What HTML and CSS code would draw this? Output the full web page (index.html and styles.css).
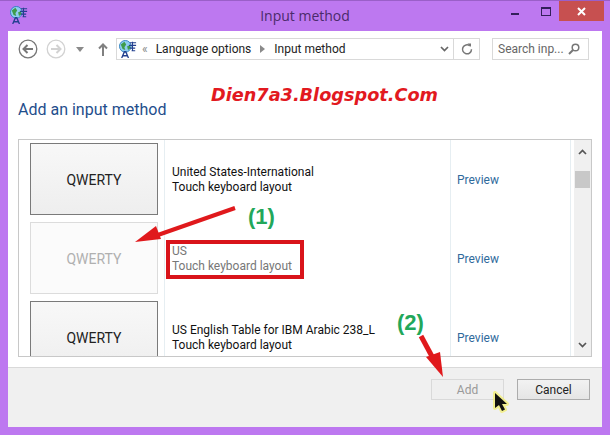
FILE: index.html
```html
<!DOCTYPE html>
<html>
    <head>
        <link rel="stylesheet" href="styles.css">
    </head>
    <body>
        <div id="window">
            <div class="titleBar">
                <svg class="titleIcon" width="18" height="18" viewBox="0 0 20 20">
                    <circle cx="7" cy="7" r="6.500" fill="#8fcdf0" stroke="#2d7fc0" stroke-width="1"/>
                    <path d="M2 5l4-3 2 3-2 3 1 3-3-1zM9 7l3-1 1 3-3 2z" fill="#3f9c4a"/>
                    <path d="M12 3h7M11 6h8M12 9h6M14 12h4M15 2v10" stroke="#23408f" stroke-width="1.200" fill="none"/>
                    <path d="M3 20l3-7h1.500l3 7M4.500 17.500h4.500" stroke="#23408f" stroke-width="1.500" fill="none"/>
                </svg>
                <div class="titleText">Input method</div>
                <div class="winControls">
                    <span class="minBtn"></span>
                    <span class="maxBtn"></span>
                    <span class="closeBtn">
                        <svg width="9" height="9" viewBox="0 0 9 9"><path d="M1 1l7 7M8 1l-7 7" stroke="#fff" stroke-width="2"/></svg>
                    </span>
                </div>
            </div>
            <div id="content">
                <div class="navRow">
                    <svg class="backIcon" width="20" height="20" viewBox="0 0 20 20">
                        <circle cx="10" cy="10" r="8.800" fill="#fff" stroke="#777" stroke-width="1.300"/>
                        <path d="M15 10H6M9.500 6L5.500 10l4 4" fill="none" stroke="#777" stroke-width="2"/>
                    </svg>
                    <svg class="forwardIcon" width="20" height="20" viewBox="0 0 20 20">
                        <circle cx="10" cy="10" r="8.800" fill="#fff" stroke="#d2d2d2" stroke-width="1.300"/>
                        <path d="M5 10h9M10.500 6l4 4-4 4" fill="none" stroke="#d2d2d2" stroke-width="2"/>
                    </svg>
                    <svg class="caretIcon" width="8" height="5" viewBox="0 0 8 5"><path d="M0 0h8L4 5z" fill="#8a8a8a"/></svg>
                    <svg class="upIcon" width="10" height="13" viewBox="0 0 10 13"><path d="M5 13V2M1 5.500L5 1.500l4 4" fill="none" stroke="#808080" stroke-width="2"/></svg>
                    <div class="addressBox">
                        <svg class="addressIcon" width="18" height="18" viewBox="0 0 20 20">
                            <circle cx="7" cy="7" r="6.500" fill="#8fcdf0" stroke="#2d7fc0" stroke-width="1"/>
                            <path d="M2 5l4-3 2 3-2 3 1 3-3-1zM9 7l3-1 1 3-3 2z" fill="#3f9c4a"/>
                            <path d="M12 3h7M11 6h8M12 9h6M14 12h4M15 2v10" stroke="#23408f" stroke-width="1.200" fill="none"/>
                            <path d="M3 20l3-7h1.500l3 7M4.500 17.500h4.500" stroke="#23408f" stroke-width="1.500" fill="none"/>
                        </svg>
                        <span class="crumbMore">&laquo;</span>
                        <span class="crumb">Language options</span>
                        <svg class="crumbArrow" width="5" height="8" viewBox="0 0 5 8"><path d="M0 0l5 4-5 4z" fill="#8a8a8a"/></svg>
                        <span class="crumb">Input method</span>
                        <svg class="addressDrop" width="9" height="6" viewBox="0 0 9 6"><path d="M1 1l3.500 3.500L8 1" fill="none" stroke="#666" stroke-width="1.700"/></svg>
                        <div class="refreshCell">
                            <svg width="12" height="12" viewBox="0 0 12 12"><path d="M8.800 2.800a4.500 4.500 0 1 0 1.700 3.500" fill="none" stroke="#777" stroke-width="1.500"/><path d="M6.500 0.500h3.500v3.500z" fill="#777"/></svg>
                        </div>
                    </div>
                    <div class="searchBox">
                        <span>Search inp...</span>
                        <svg width="12" height="12" viewBox="0 0 12 12"><circle cx="7.500" cy="4.500" r="3.300" fill="none" stroke="#777" stroke-width="1.500"/><path d="M5 7l-4 4" stroke="#777" stroke-width="2"/></svg>
                    </div>
                </div>
                <h1 class="pageTitle">Add an input method</h1>
                <div class="listBox">
                    <div class="listRows">
                        <div class="listRow">
                            <div class="keyCell"><div class="qwertyBtn">QWERTY</div></div>
                            <div class="nameCell">United States-International<br>Touch keyboard layout</div>
                            <div class="previewCell">Preview</div>
                        </div>
                        <div class="listRow">
                            <div class="keyCell"><div class="qwertyBtn disabled">QWERTY</div></div>
                            <div class="nameCell fontGrey">US<br>Touch keyboard layout</div>
                            <div class="previewCell">Preview</div>
                        </div>
                        <div class="listRow">
                            <div class="keyCell"><div class="qwertyBtn">QWERTY</div></div>
                            <div class="nameCell">US English Table for IBM Arabic 238_L<br>Touch keyboard layout</div>
                            <div class="previewCell">Preview</div>
                        </div>
                    </div>
                    <div class="scrollBar">
                        <svg width="9" height="6" viewBox="0 0 9 6"><path d="M1 5l3.500-3.500L8 5" fill="none" stroke="#555" stroke-width="1.700"/></svg>
                        <div class="scrollThumb"></div>
                        <svg class="scrollDown" width="9" height="6" viewBox="0 0 9 6"><path d="M1 1l3.500 3.500L8 1" fill="none" stroke="#555" stroke-width="1.700"/></svg>
                    </div>
                </div>
                <div class="footer">
                    <div class="footBtn disabled">Add</div>
                    <div class="footBtn">Cancel</div>
                </div>
            </div>
            <!-- annotations drawn over the screenshot -->
            <div class="watermark">Dien7a3.Blogspot.Com</div>
            <div class="redBox"></div>
            <div class="stepLabel stepOne">(1)</div>
            <div class="stepLabel stepTwo">(2)</div>
            <svg class="arrowLayer" width="610" height="435" viewBox="0 0 610 435">
                <path d="M235 208L155 236" stroke="#e0191c" stroke-width="4" fill="none"/>
                <path d="M135 242L156 226L161 239z" fill="#e0191c"/>
                <path d="M421 336L435 362" stroke="#e0191c" stroke-width="5" fill="none"/>
                <path d="M443 377L426 357L440 352z" fill="#e0191c"/>
                <path d="M495 393V408L499 405L502 411L505 409.500L502 404H507z" fill="#f4ef6a" stroke="#f4ef6a" stroke-width="4" stroke-linejoin="round" opacity="0.700"/>
                <path d="M495 393V408L499 405L502 411L505 409.500L502 404H507z" fill="#111"/>
            </svg>
        </div>
    </body>
</html>
```

FILE: styles.css
```css
html, body {
    margin: 0;
    padding: 0;
}
#window {
    position: relative;
    width: 610px;
    height: 435px;
    box-sizing: border-box;
    padding: 0 8px 8px 8px;
    background: #bd78f0;
    border-top: 1px solid #9a5fc8;
    font-family: Roboto, "Open Sans", sans-serif;
    overflow: hidden;
}
.titleBar {
    position: relative;
    display: flex;
    align-items: center;
    height: 30px;
}
.titleIcon {
    margin: -2px 0 0 2px;
}
.titleText {
    position: absolute;
    left: 0;
    right: 0;
    top: 6px;
    text-align: center;
    font-family: "Open Sans", sans-serif;
    font-size: 14px;
    line-height: 18px;
    color: #4b2a6b;
}
.winControls {
    position: absolute;
    right: -2px;
    top: 0;
    display: flex;
    align-items: center;
    height: 20px;
}
.minBtn {
    width: 8px;
    height: 2px;
    margin: 6px 22px 0 0;
    background: #33205a;
}
.maxBtn {
    width: 8px;
    height: 6px;
    margin-right: 8px;
    border: 1px solid #33205a;
    border-top-width: 2px;
}
.closeBtn {
    display: flex;
    align-items: center;
    justify-content: center;
    width: 45px;
    height: 20px;
    background: #c75050;
}
#content {
    display: flex;
    flex-direction: column;
    height: 396px;
    background: #fff;
}
.navRow {
    display: flex;
    align-items: center;
    height: 22px;
    margin-top: 7px;
    padding-left: 10px;
}
.forwardIcon {
    margin-left: 8px;
}
.caretIcon {
    margin-left: 10px;
}
.upIcon {
    margin-left: 14px;
}
.addressBox {
    display: flex;
    align-items: center;
    box-sizing: border-box;
    flex: none;
    width: 364px;
    height: 22px;
    margin-left: 8px;
    border: 1px solid #d9d9d9;
    font-size: 12px;
    color: #222;
}
.addressIcon {
    margin-left: 2px;
}
.crumbMore {
    margin: 0 8px 0 5px;
    color: #888;
}
.crumbArrow {
    margin: 0 9px 0 9px;
}
.addressDrop {
    margin-left: auto;
    margin-right: 4px;
}
.refreshCell {
    display: flex;
    align-items: center;
    justify-content: center;
    width: 25px;
    height: 20px;
    border-left: 1px solid #d9d9d9;
}
.searchBox {
    display: flex;
    align-items: center;
    justify-content: space-between;
    box-sizing: border-box;
    flex: none;
    width: 97px;
    height: 22px;
    margin-left: 12px;
    padding: 0 8px 0 5px;
    border: 1px solid #d9d9d9;
    font-size: 12px;
    color: #666;
}
.pageTitle {
    height: 22px;
    margin: 39px 0 0 10px;
    font-size: 16px;
    font-weight: normal;
    line-height: 22px;
    color: #1f4e8c;
}
.listBox {
    display: flex;
    box-sizing: border-box;
    height: 218px;
    margin: 18px 10px 0 10px;
    border: 1px solid #c8c8c8;
    overflow: hidden;
}
.listRows {
    flex: 1;
    overflow: hidden;
}
.listRow {
    display: flex;
    height: 79px;
}
.keyCell {
    box-sizing: border-box;
    width: 146px;
    flex: none;
    padding: 3px 6px 0 11px;
    border-right: 1px solid #e6eef2;
}
.qwertyBtn {
    box-sizing: border-box;
    display: flex;
    align-items: center;
    justify-content: center;
    height: 72px;
    padding-top: 1px;
    border: 1px solid #7a7a7a;
    background: linear-gradient(#f8f8f8, #eeeeee);
    font-size: 14px;
    color: #222;
}
.qwertyBtn.disabled {
    border-color: #dcdcdc;
    background: #fbfbfb;
    color: #b0b0b0;
}
.nameCell {
    box-sizing: border-box;
    width: 285px;
    flex: none;
    padding: 25px 0 0 7px;
    font-size: 12px;
    line-height: 15px;
    color: #111;
}
.fontGrey {
    color: #777;
}
.previewCell {
    flex: 1;
    margin-right: 3px;
    padding: 32px 0 0 6px;
    border-left: 1px solid #e6eef2;
    border-right: 1px solid #e6eef2;
    font-size: 12px;
    line-height: 16px;
    color: #2f6a9c;
}
.scrollBar {
    display: flex;
    flex-direction: column;
    align-items: center;
    box-sizing: border-box;
    width: 17px;
    flex: none;
    padding: 9px 1px 8px 1px;
    background: #f0f0f0;
}
.scrollThumb {
    width: 15px;
    height: 17px;
    margin-top: 16px;
    background: #c8c8c8;
}
.scrollDown {
    margin-top: auto;
}
.footer {
    flex: 1;
    display: flex;
    justify-content: flex-end;
    gap: 13px;
    margin-top: 10px;
    padding: 11px 12px 0 0;
    background: #f0f0f0;
    border-top: 1px solid #d9d9d9;
}
.footBtn {
    box-sizing: border-box;
    display: flex;
    align-items: center;
    justify-content: center;
    width: 73px;
    height: 21px;
    border: 1px solid #acacac;
    background: linear-gradient(#f2f2f2, #e5e5e5);
    font-size: 12px;
    color: #222;
}
.footBtn.disabled {
    border-color: #d9d9d9;
    background: #efefef;
    color: #999;
}
.watermark {
    position: absolute;
    left: 211px;
    top: 81px;
    font-family: "DejaVu Sans", sans-serif;
    font-size: 17.700px;
    font-weight: bold;
    font-style: italic;
    line-height: 26px;
    color: #e2191f;
}
.redBox {
    position: absolute;
    left: 166px;
    top: 239px;
    width: 130px;
    height: 31px;
    border: 4px solid #d9141a;
}
.stepLabel {
    position: absolute;
    font-family: "Liberation Sans", sans-serif;
    font-size: 22px;
    font-weight: bold;
    line-height: 26px;
    color: #22a75a;
}
.stepOne {
    left: 248px;
    top: 203px;
}
.stepTwo {
    left: 397px;
    top: 309px;
}
.arrowLayer {
    position: absolute;
    left: 0;
    top: -1px;
}
```
